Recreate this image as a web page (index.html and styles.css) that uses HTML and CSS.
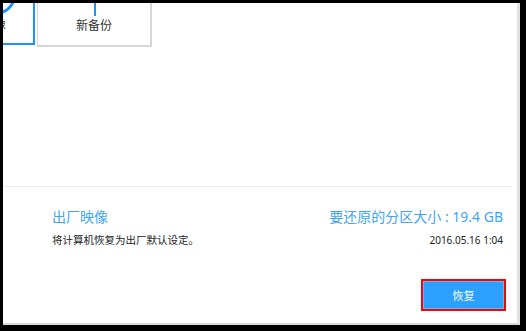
FILE: index.html
```html
<!DOCTYPE html>
<html lang="zh-CN">
<head>
<meta charset="utf-8">
<title>恢复</title>
<link rel="stylesheet" href="styles.css">
</head>
<body>
<div class="frame">
  <div class="panel">
    <svg class="tile-icon-arc" width="16" height="16" viewBox="0 0 16 16">
      <circle cx="-6" cy="-7" r="17" fill="none" stroke="#1e90ff" stroke-width="3"/>
    </svg>
    <div class="tiles">
      <div class="tile tile-active">
        <span class="tile-label">出厂映像</span>
      </div>
      <div class="tile">
        <span class="tile-stem"></span>
        <span class="tile-label">新备份</span>
      </div>
    </div>
    <div class="separator"></div>
    <div class="info">
      <div class="info-left">
        <div class="title">出厂映像</div>
        <div class="desc">将计算机恢复为出厂默认设定。</div>
      </div>
      <div class="info-right">
        <div class="title">要还原的分区大小 : 19.4 GB</div>
        <div class="date">2016.05.16 1:04</div>
      </div>
    </div>
    <div class="actions">
      <button class="btn-restore">恢复</button>
    </div>
  </div>
</div>
</body>
</html>
```
FILE: styles.css
```css
html, body {
  margin: 0;
  padding: 0;
  background: #000;
  width: 526px;
  height: 331px;
  overflow: hidden;
  font-family: "Noto Sans", "Noto Sans CJK SC", sans-serif;
}
.frame {
  padding: 3px 6px 6px 3px;
  height: 331px;
  box-sizing: border-box;
}
.panel {
  position: relative;
  background: #fff;
  height: 100%;
  box-sizing: border-box;
  border-right: 3px solid #e2e2e2;
  border-bottom: 2px solid #dadada;
  overflow: hidden;
  display: flex;
  flex-direction: column;
}
.tile-icon-arc {
  position: absolute;
  left: 0;
  top: 0;
  z-index: 1;
}
.tiles {
  display: flex;
  align-items: flex-start;
  gap: 2px;
  margin-top: -55px;
  margin-left: -83px;
}
.tile {
  position: relative;
  width: 115px;
  height: 99px;
  box-sizing: border-box;
  border: 1px solid #d6d6d6;
  border-bottom-width: 2px;
  border-right-width: 2px;
  display: flex;
  flex-direction: column;
  align-items: center;
  justify-content: flex-end;
  padding-bottom: 11px;
}
.tile-active {
  height: 97px;
  border: 2px solid #1e90ff;
  align-items: flex-end;
  padding-right: 27px;
  padding-bottom: 10px;
}
.tile-stem {
  position: absolute;
  left: 56px;
  top: 54px;
  width: 2px;
  height: 13px;
  background: #1e90ff;
}
.tile-label {
  font-size: 12px;
  line-height: 16px;
  color: #333;
}
.separator {
  height: 1px;
  background: #efefef;
  margin-top: 139px;
  margin-right: 5px;
}
.info {
  display: flex;
  justify-content: space-between;
  padding: 20px 14px 0 49px;
}
.title {
  font-size: 14px;
  line-height: 20px;
  color: #42a5f2;
}
.desc, .date {
  margin-top: 5px;
  font-size: 10.5px;
  line-height: 16px;
  color: #222;
}
.info-right {
  text-align: right;
}
.date {
  font-size: 10px;
}
.actions {
  display: flex;
  justify-content: flex-end;
  padding-right: 11px;
  margin-top: 31px;
}
.btn-restore {
  width: 85px;
  height: 32px;
  box-sizing: border-box;
  border: 2px solid #ff0000;
  background: #2ba0fe;
  box-shadow: inset 0 0 0 1px #5bb6fb;
  color: #fff;
  font-family: "Noto Sans CJK SC", sans-serif;
  font-size: 11px;
  padding: 0;
}
```
